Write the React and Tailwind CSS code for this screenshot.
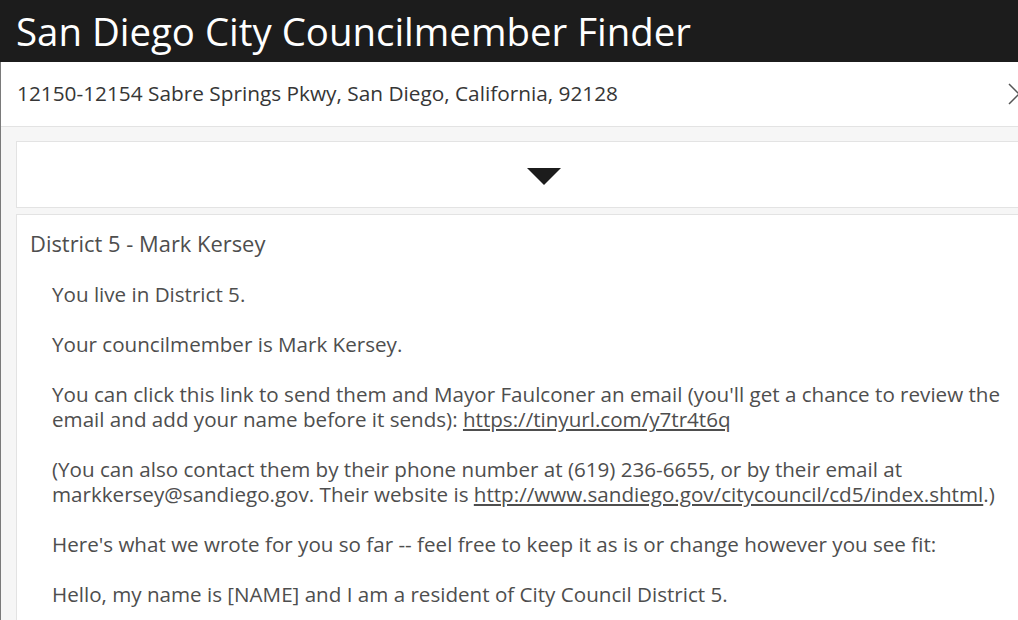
import React from 'react';

const Para = ({ children }) => <p className="mb-[25px]">{children}</p>;

const App = () => {
  return (
    <div className="w-[1018px] h-[620px] overflow-hidden bg-[#f6f6f6] font-['Open_Sans',sans-serif] text-[#4e4e4e]">
      <header className="h-[62px] bg-[#1c1c1c] flex items-center pl-[16px]">
        <h1 className="text-white text-[38.4px] leading-none whitespace-nowrap">San Diego City Councilmember Finder</h1>
      </header>
      <div className="border-l border-[#7a7a7a]">
        <div className="h-[65px] bg-white border-b border-[#e3e3e3] flex items-center justify-between pl-[16px] pr-[2px]">
          <span className="text-[20.8px] text-[#363636] whitespace-nowrap">12150-12154 Sabre Springs Pkwy, San Diego, California, 92128</span>
          <svg width="12" height="22" viewBox="0 0 12 22" className="mr-[-4px]">
            <path d="M1 1 L11 11 L1 21" fill="none" stroke="#555" strokeWidth="1.5" />
          </svg>
        </div>
        <div className="pl-[15px] pt-[14px]">
          <div className="h-[67px] bg-white border border-r-0 border-[#e3e3e3] flex items-center justify-center">
            <svg width="34" height="17" viewBox="0 0 34 17" className="ml-[53px] mt-[4px]">
              <path d="M0 0 L34 0 L17 17 Z" fill="#1c1c1c" />
            </svg>
          </div>
          <div className="mt-[6px] bg-white border border-r-0 border-[#e3e3e3] pl-[13px] pt-[14px]">
            <h2 className="text-[21.9px] leading-[30px] mb-[23px]">District 5 - Mark Kersey</h2>
            <div className="pl-[22px] pr-[10px] text-[20.6px] leading-[25px]">
              <Para>You live in District 5.</Para>
              <Para>Your councilmember is Mark Kersey.</Para>
              <Para>
                You can click this link to send them and Mayor Faulconer an email (you'll get a chance to review the email and add your name before it sends):{' '}
                <a className="underline" href="#">https://tinyurl.com/y7tr4t6q</a>
              </Para>
              <Para>
                (You can also contact them by their phone number at (619) 236-6655, or by their email at markkersey@sandiego.gov. Their website is{' '}
                <a className="underline" href="#">http://www.sandiego.gov/citycouncil/cd5/index.shtml</a>.)
              </Para>
              <Para>Here's what we wrote for you so far -- feel free to keep it as is or change however you see fit:</Para>
              <Para>Hello, my name is [NAME] and I am a resident of City Council District 5.</Para>
            </div>
          </div>
        </div>
      </div>
    </div>
  );
};

export default App;
